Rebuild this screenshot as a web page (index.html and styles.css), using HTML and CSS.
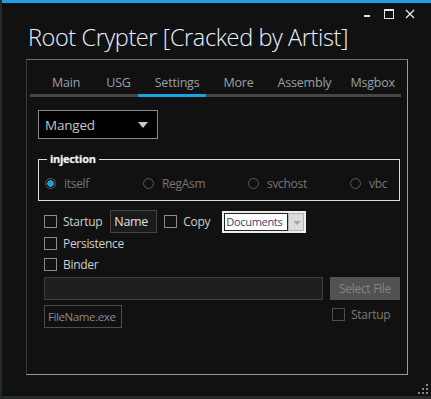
FILE: index.html
```html
<!DOCTYPE html>
<html lang="en">
<head>
    <meta charset="UTF-8">
    <meta name="viewport" content="width=device-width, initial-scale=1.0">
    <title>Root Crypter</title>
    <link rel="stylesheet" href="styles.css">
</head>
<body>
    <div class="window">
        <div class="titlebar">
            <h1 class="title">Root Crypter [Cracked by Artist]</h1>
            <div class="controls">
                <svg class="ctl" width="10" height="10" viewBox="0 0 10 10"><rect x="1" y="6" width="6" height="2" fill="#e6e6e6"/></svg>
                <svg class="ctl" width="10" height="10" viewBox="0 0 10 10"><rect x="0.5" y="0.5" width="9" height="9" fill="none" stroke="#e6e6e6"/><rect x="0" y="0" width="10" height="2" fill="#e6e6e6"/></svg>
                <svg class="ctl" width="10" height="10" viewBox="0 0 10 10"><path d="M1 1 L9 9 M9 1 L1 9" stroke="#e6e6e6" stroke-width="1.4"/></svg>
            </div>
        </div>

        <div class="panel">
            <div class="tabs">
                <span class="tab first">Main</span>
                <span class="tab">USG</span>
                <span class="tab active">Settings</span>
                <span class="tab">More</span>
                <span class="tab">Assembly</span>
                <span class="tab last">Msgbox</span>
            </div>

            <div class="select">
                <span>Manged</span>
                <span class="caret"></span>
            </div>

            <div class="group">
                <span class="group-label">injection</span>
                <div class="radios">
                    <span class="radio checked"><span class="circle"></span>itself</span>
                    <span class="radio"><span class="circle"></span>RegAsm</span>
                    <span class="radio"><span class="circle"></span>svchost</span>
                    <span class="radio"><span class="circle"></span>vbc</span>
                </div>
            </div>

            <div class="row row-one">
                <span class="check"><span class="box"></span>Startup</span>
                <span class="field name-field">Name</span>
                <span class="check"><span class="box"></span>Copy</span>
                <span class="combo">
                    <span class="combo-text">Documents</span>
                    <span class="combo-btn"></span>
                </span>
            </div>
            <div class="row row-two">
                <span class="check"><span class="box"></span>Persistence</span>
            </div>
            <div class="row row-three">
                <span class="check"><span class="box"></span>Binder</span>
            </div>
            <div class="row row-file">
                <span class="field path-field"></span>
                <span class="button">Select File</span>
            </div>
            <div class="row row-last">
                <span class="field exe-field">FileName.exe</span>
                <span class="check dim"><span class="box"></span>Startup</span>
            </div>
        </div>

        <div class="grip">
            <i></i><i></i><i></i><i></i><i></i><i></i>
        </div>
    </div>
</body>
</html>
```

FILE: styles.css
```css
body {
    margin: 0;
    background-color: #24292b;
    font-family: "Open Sans", "Noto Sans", sans-serif;
    overflow: hidden;
}
.window {
    position: relative;
    margin-left: 2px;
    height: 393px;
    background-color: #111111;
    border-top: 3px solid #1ba1e2;
}
.titlebar {
    display: flex;
    justify-content: space-between;
    align-items: flex-start;
    height: 56px;
}
.title {
    margin: 18px 0 0 26px;
    font-size: 23.5px;
    font-weight: 300;
    line-height: 32px;
    letter-spacing: -0.4px;
    color: #eaf2ff;
}
.controls {
    display: flex;
    gap: 11px;
    margin: 6px 16px 0 0;
}
.ctl {
    display: block;
}
.panel {
    box-sizing: border-box;
    width: 382px;
    height: 316px;
    margin-left: 24px;
    border: 1px solid;
    border-color: #6e6e6e #9c9c9c #9c9c9c #3a3a3a;
}
.tabs {
    display: flex;
    margin: 12px 6px 0 3px;
    border-bottom: 3px solid #464646;
}
.tab {
    height: 22px;
    line-height: 22px;
    padding: 0 7px 0 17px;
    font-size: 12.5px;
    letter-spacing: -0.2px;
    color: #9aa0a8;
}
.tab.first {
    margin-left: 5px;
    padding-right: 9px;
}
.tab.last {
    padding-left: 12px;
}
.tab.active {
    border-bottom: 3px solid #1ba1e2;
    margin-bottom: -3px;
}
.select {
    box-sizing: border-box;
    display: flex;
    justify-content: space-between;
    align-items: center;
    width: 120px;
    height: 29px;
    margin: 13px 0 0 11px;
    padding: 0 9px 0 6px;
    background-color: #000;
    border: 1px solid #8a8a8a;
    font-size: 13.5px;
    letter-spacing: -0.2px;
    color: #c4c4c4;
}
.caret {
    width: 0;
    height: 0;
    border-left: 5px solid transparent;
    border-right: 5px solid transparent;
    border-top: 6px solid #c8c8c8;
}
.group {
    position: relative;
    box-sizing: border-box;
    width: 362px;
    height: 42px;
    margin: 20px 0 0 11px;
    padding-top: 13px;
    border: 1px solid #dcdcdc;
}
.group-label {
    position: absolute;
    top: -9px;
    left: 8px;
    padding: 0 3px;
    background-color: #111111;
    font-size: 11px;
    font-weight: 700;
    line-height: 16px;
    letter-spacing: -0.3px;
    color: #f0f0f0;
    text-shadow: 0 0 1px #888;
}
.radios {
    display: grid;
    grid-template-columns: 98px 105px 102px auto;
    padding-left: 6px;
}
.radio {
    display: flex;
    align-items: center;
    gap: 8px;
    height: 20px;
    font-size: 12px;
    letter-spacing: -0.3px;
    color: #767676;
}
.circle {
    box-sizing: border-box;
    width: 11px;
    height: 11px;
    border: 1px solid #5c5c5c;
    border-radius: 50%;
}
.radio.checked .circle {
    background: radial-gradient(circle, #1ba1e2 0 3px, transparent 3.5px);
}
.row {
    display: flex;
    align-items: center;
    margin-left: 17px;
    font-size: 12px;
    letter-spacing: -0.3px;
    color: #cfcfcf;
}
.row-one {
    height: 23px;
    margin-top: 9px;
}
.row-two {
    height: 19px;
    margin-top: 1px;
}
.row-three {
    height: 20px;
    margin-top: 1px;
}
.row-file {
    height: 23px;
    margin-top: 3px;
}
.row-last {
    align-items: flex-start;
    height: 23px;
    margin-top: 5px;
}
.check {
    display: flex;
    align-items: center;
    gap: 6px;
}
.box {
    box-sizing: border-box;
    width: 13px;
    height: 13px;
    border: 1px solid #8c8c8c;
}
.check.dim {
    margin: 1px 0 0 210px;
    color: #7a7a7a;
}
.check.dim .box {
    border-color: #4e4e4e;
}
.field {
    box-sizing: border-box;
    height: 23px;
    line-height: 21px;
    border: 1px solid #444;
    background-color: #1b1b1b;
}
.name-field {
    width: 47px;
    margin: 0 7px 0 8px;
    padding-left: 3px;
    font-size: 12.5px;
    color: #e0e0e0;
}
.combo {
    box-sizing: border-box;
    display: flex;
    width: 84px;
    height: 22px;
    margin-left: 12px;
    padding: 2px;
    background-color: #ececec;
}
.combo-text {
    box-sizing: border-box;
    width: 64px;
    height: 18px;
    padding-left: 1px;
    line-height: 16px;
    border: 1px solid #222;
    background-color: #fff;
    font-size: 11px;
    letter-spacing: -0.3px;
    color: #3c4470;
    overflow: hidden;
}
.combo-btn {
    position: relative;
    flex: 1;
    border: 1px solid #b4b4b4;
    background-color: #dcdcdc;
}
.combo-btn::after {
    content: "";
    position: absolute;
    top: 7px;
    left: 4px;
    border-left: 4px solid transparent;
    border-right: 4px solid transparent;
    border-top: 4px solid #a8a8a8;
}
.path-field {
    width: 279px;
    background-color: #1f1f1f;
    border-color: #3e3e3e;
}
.button {
    box-sizing: border-box;
    width: 70px;
    height: 23px;
    margin-left: 7px;
    line-height: 23px;
    text-align: center;
    background-color: #525252;
    font-size: 12px;
    color: #858585;
}
.exe-field {
    width: 78px;
    padding-left: 3px;
    background-color: #111111;
    border-color: #4c4c4c;
    font-size: 11.5px;
    letter-spacing: -0.4px;
    color: #8a8a8a;
}
.grip {
    position: absolute;
    right: 3px;
    bottom: 2px;
    display: grid;
    grid-template-columns: repeat(3, 2px);
    grid-template-rows: repeat(3, 2px);
    gap: 2px;
}
.grip i {
    background-color: #8a8a8a;
}
.grip i:nth-child(1) {
    grid-area: 1 / 3;
}
.grip i:nth-child(2) {
    grid-area: 2 / 2;
}
.grip i:nth-child(3) {
    grid-area: 2 / 3;
}
.grip i:nth-child(4) {
    grid-area: 3 / 1;
}
.grip i:nth-child(5) {
    grid-area: 3 / 2;
}
.grip i:nth-child(6) {
    grid-area: 3 / 3;
}
```
